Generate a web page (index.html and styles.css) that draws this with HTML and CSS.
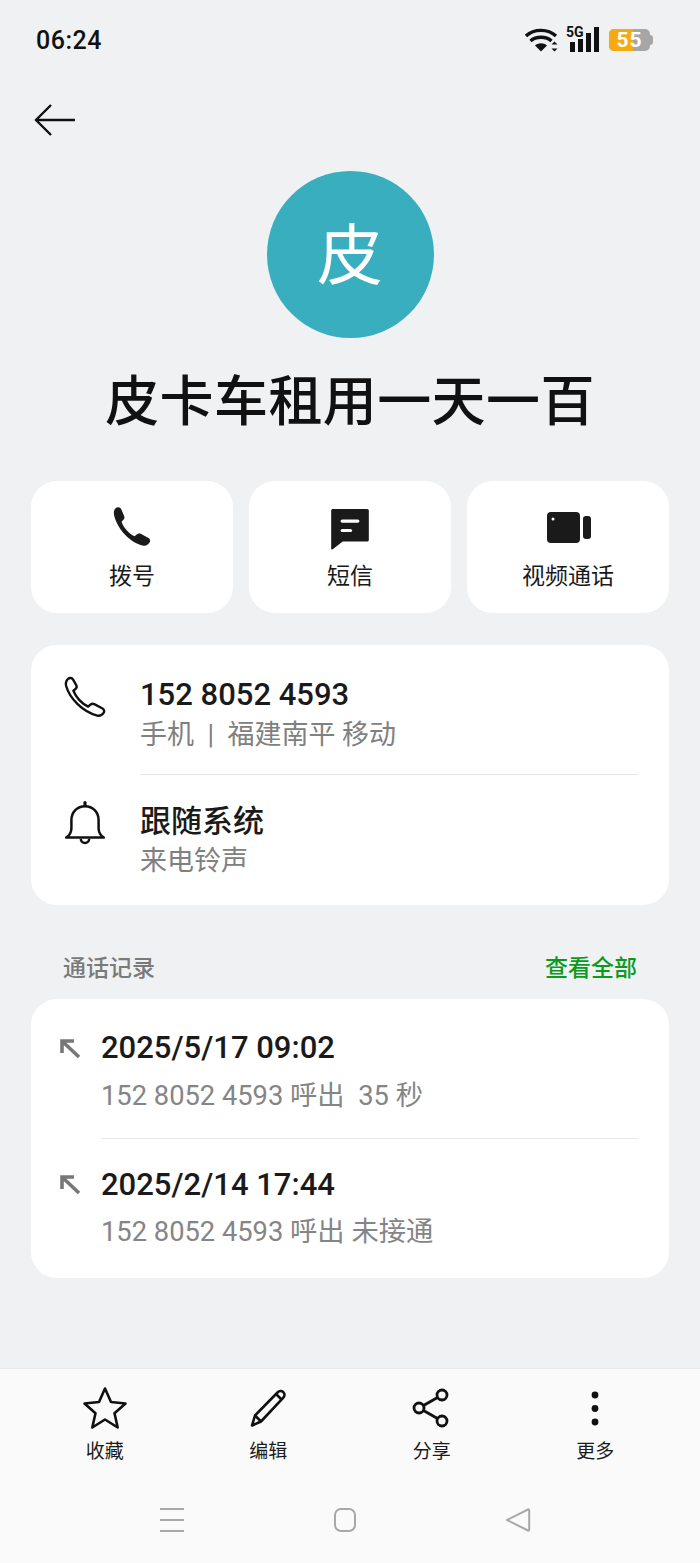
FILE: index.html
```html
<!DOCTYPE html>
<html lang="zh-CN">
<head>
    <meta charset="UTF-8">
    <meta name="viewport" content="width=device-width, initial-scale=1.0">
    <title>联系人详情</title>
    <link rel="stylesheet" href="styles.css">
</head>
<body>
<div class="page">
    <div class="status-bar">
        <span class="clock">06:24</span>
        <div class="status-icons">
            <svg class="wifi" width="34" height="26" viewBox="0 0 34 26">
                <path d="M1 9C9 1.500 23 1.500 31 9" fill="none" stroke="#111" stroke-width="3.400"/>
                <path d="M5.500 14C11 9 21 9 26.500 14" fill="none" stroke="#111" stroke-width="3.400"/>
                <path d="M10 18.500C13.500 15.500 18.500 15.500 22 18.500L16 24.500Z" fill="#111"/>
                <path d="M29.500 14.500l3 3h-6zM29.500 24.500l3-3h-6z" fill="#111"/>
            </svg>
            <div class="signal">
                <span class="five-g">5G</span>
                <svg width="34" height="26" viewBox="0 0 34 26">
                    <rect x="4" y="15" width="5" height="10" fill="#111"/>
                    <rect x="12" y="12" width="5" height="13" fill="#111"/>
                    <rect x="20" y="6" width="5" height="19" fill="#111"/>
                    <rect x="28" y="0" width="5" height="25" fill="#111"/>
                </svg>
            </div>
            <div class="battery">
                <div class="battery-body"><span class="battery-fill"></span><span class="battery-num">55</span></div>
                <span class="battery-tip"></span>
            </div>
        </div>
    </div>

    <div class="top-nav">
        <svg width="42" height="34" viewBox="0 0 42 34">
            <path d="M41 17H2M17 2L2 17l15 15" fill="none" stroke="#111" stroke-width="2.400"/>
        </svg>
    </div>

    <div class="profile">
        <div class="avatar">皮</div>
        <h1 class="name">皮卡车租用一天一百</h1>
    </div>

    <div class="actions">
        <div class="action-card">
            <svg width="46" height="46" viewBox="0 0 44 44">
                <path transform="translate(1.500 -2.500)" d="M5 3.500c1.500-1.300 4-1 5 .7l3 7c.6 1.300.2 2.500-.7 3.500l-1.800 1.800c1.500 5 7 11.500 12.500 14l2.300-2c1-.8 2.300-1 3.500-.3l7.500 4c1.500.8 2 2.800 1 4.300-1.200 2-3.200 3.300-5.500 3C19 37 7 24 3.500 11 2.800 8 3 5.200 5 3.500z" fill="#1a1a1a"/>
            </svg>
            <span class="action-label">拨号</span>
        </div>
        <div class="action-card">
            <svg width="46" height="46" viewBox="0 0 44 44">
                <path d="M4 3.500C4 2.500 4.800 2 5.500 2h33c.9 0 1.500.7 1.500 1.500v28c0 .8-.6 1.500-1.500 1.500H15L5.500 40.500c-.7.400-1.500 0-1.500-.8z" fill="#1a1a1a"/>
                <rect x="13" y="12" width="18" height="3" rx="1.500" fill="#fff"/>
                <rect x="13" y="21" width="11" height="3" rx="1.500" fill="#fff"/>
            </svg>
            <span class="action-label">短信</span>
        </div>
        <div class="action-card">
            <svg width="46" height="46" viewBox="0 0 46 46">
                <rect x="2" y="5" width="33" height="31" rx="4" fill="#1a1a1a"/>
                <rect x="38" y="9" width="8" height="23" rx="3" fill="#1a1a1a"/>
                <circle cx="8" cy="12" r="1.500" fill="#fff"/>
            </svg>
            <span class="action-label">视频通话</span>
        </div>
    </div>

    <div class="card info-card">
        <div class="info-row">
            <svg class="info-icon phone" width="46" height="46" viewBox="0 0 42 42">
                <path d="M5.500 4.500c1.300-1.300 3.500-1.200 4.500.4l3 5.200c.7 1.200.4 2.500-.6 3.400l-2 1.800c2.500 6 7.500 11.500 13.500 14.500l2.300-2c1-.8 2.200-.9 3.300-.3l7.500 4c1.600.9 1.900 2.700 1 4-1.300 1.900-3.500 3-5.800 2.500C19 34.500 7 22.500 3.800 11c-.6-2.400 0-4.900 1.700-6.500z" fill="none" stroke="#111" stroke-width="2.200" stroke-linejoin="round"/>
            </svg>
            <div class="info-text first">
                <div class="info-title">152 8052 4593</div>
                <div class="info-sub">手机 &nbsp;|&nbsp; 福建南平 移动</div>
            </div>
        </div>
        <div class="info-row">
            <svg class="info-icon bell" width="46" height="46" viewBox="0 0 44 44">
                <path d="M4 35c3-2 5-4.500 5-9v-7.500c0-8 5.500-13.500 13-13.500s13 5.500 13 13.500V26c0 4.500 2 7 5 9z" fill="none" stroke="#111" stroke-width="2.400" stroke-linejoin="round"/>
                <path d="M22 1.500v3" stroke="#111" stroke-width="3" stroke-linecap="round"/>
                <path d="M18 36c0 5.500 8 5.500 8 0" fill="none" stroke="#111" stroke-width="2.400"/>
            </svg>
            <div class="info-text">
                <div class="info-title">跟随系统</div>
                <div class="info-sub">来电铃声</div>
            </div>
        </div>
    </div>

    <div class="section-head">
        <span class="section-title">通话记录</span>
        <span class="section-link">查看全部</span>
    </div>

    <div class="card log-card">
        <div class="log-row">
            <svg class="log-icon" width="22" height="22" viewBox="0 0 22 22">
                <path d="M3 15V3h12M3.500 3.500L20 19" fill="none" stroke="#777" stroke-width="3.600"/>
            </svg>
            <div class="log-text first">
                <div class="log-time">2025/5/17 09:02</div>
                <div class="log-detail">152 8052 4593 呼出&nbsp; 35 秒</div>
            </div>
        </div>
        <div class="log-row">
            <svg class="log-icon" width="22" height="22" viewBox="0 0 22 22">
                <path d="M3 15V3h12M3.500 3.500L20 19" fill="none" stroke="#777" stroke-width="3.600"/>
            </svg>
            <div class="log-text">
                <div class="log-time">2025/2/14 17:44</div>
                <div class="log-detail">152 8052 4593 呼出 未接通</div>
            </div>
        </div>
    </div>

    <div class="bottom">
        <div class="toolbar">
            <div class="tool">
                <svg width="46" height="44" viewBox="0 0 46 44">
                    <path d="M23 2.500l6 13.500 14.500 1.500-11 9.800 3.200 14.200L23 33.500 10.300 41.500l3.200-14.200-11-9.800L17 16z" fill="none" stroke="#111" stroke-width="2.600" stroke-linejoin="round"/>
                </svg>
                <span class="tool-label">收藏</span>
            </div>
            <div class="tool">
                <svg width="46" height="44" viewBox="0 0 46 44">
                    <path d="M6 39.500l3-10L31.500 6.500c1.800-1.800 4.200-2 5.800-.4 1.600 1.600 1.600 4-.2 5.800L15 35.500z" fill="none" stroke="#111" stroke-width="2.600" stroke-linejoin="round" transform="translate(1 0)"/>
                    <path d="M10 29.500l6 6M31 8l6 6" fill="none" stroke="#111" stroke-width="2.600"/>
                </svg>
                <span class="tool-label">编辑</span>
            </div>
            <div class="tool">
                <svg width="46" height="44" viewBox="0 0 46 44">
                    <circle cx="33" cy="9" r="5" fill="none" stroke="#111" stroke-width="2.800"/>
                    <circle cx="10" cy="22" r="5" fill="none" stroke="#111" stroke-width="2.800"/>
                    <circle cx="33" cy="35" r="5" fill="none" stroke="#111" stroke-width="2.800"/>
                    <path d="M14.500 19.500L28.500 11.500M14.500 24.500L28.500 32.500" stroke="#111" stroke-width="2.800"/>
                </svg>
                <span class="tool-label">分享</span>
            </div>
            <div class="tool">
                <svg width="46" height="44" viewBox="0 0 46 44">
                    <circle cx="23" cy="9" r="3.400" fill="#111"/>
                    <circle cx="23" cy="22.500" r="3.400" fill="#111"/>
                    <circle cx="23" cy="36" r="3.400" fill="#111"/>
                </svg>
                <span class="tool-label">更多</span>
            </div>
        </div>
        <div class="nav-keys">
            <svg width="28" height="28" viewBox="0 0 28 28">
                <path d="M2 3h24M2 14h24M2 25h24" stroke="#a8a8a8" stroke-width="2"/>
            </svg>
            <svg width="28" height="28" viewBox="0 0 28 28">
                <rect x="4" y="3" width="20" height="22" rx="6" fill="none" stroke="#a8a8a8" stroke-width="2"/>
            </svg>
            <svg width="28" height="28" viewBox="0 0 28 28">
                <path d="M3 14L24 3.500c.6-.3 1.200 0 1.200.8v19.400c0 .8-.6 1.100-1.200.8z" fill="none" stroke="#a8a8a8" stroke-width="2" stroke-linejoin="round"/>
            </svg>
        </div>
    </div>
</div>
</body>
</html>
```

FILE: styles.css
```css
* {
    box-sizing: border-box;
}
body {
    margin: 0;
    background-color: #eff1f3;
    font-family: Roboto, "Noto Sans CJK SC", sans-serif;
    color: #1a1a1a;
}
.page {
    height: 1563px;
    width: 700px;
    display: flex;
    flex-direction: column;
    overflow: hidden;
}

/* status bar */
.status-bar {
    display: flex;
    justify-content: space-between;
    align-items: center;
    height: 26px;
    margin-top: 27px;
    padding: 0 47px 0 36px;
}
.clock {
    font-size: 25px;
    font-weight: 500;
    color: #111;
    letter-spacing: 0.5px;
}
.status-icons {
    display: flex;
    align-items: center;
}
.wifi {
    margin-right: 7px;
}
.signal {
    position: relative;
    width: 34px;
    height: 26px;
    margin-right: 9px;
}
.signal svg {
    display: block;
}
.five-g {
    position: absolute;
    left: 0;
    top: -1px;
    font-size: 14px;
    line-height: 13px;
    font-weight: 700;
    color: #111;
}
.battery {
    display: flex;
    align-items: center;
}
.battery-body {
    position: relative;
    width: 41px;
    height: 22px;
    border-radius: 5px;
    background-color: #a6a6a6;
    overflow: hidden;
}
.battery-fill {
    display: block;
    width: 58%;
    height: 100%;
    background-color: #f5ab10;
}
.battery-num {
    position: absolute;
    left: 0;
    right: 0;
    top: 0;
    text-align: center;
    font-size: 21px;
    line-height: 22px;
    font-weight: 700;
    letter-spacing: 1px;
    color: #fff;
}
.battery-tip {
    width: 3px;
    height: 10px;
    background-color: #a6a6a6;
    border-radius: 0 3px 3px 0;
}

.top-nav {
    margin-top: 50px;
    padding-left: 34px;
    height: 34px;
}
.top-nav svg {
    display: block;
}

/* avatar and name */
.profile {
    display: flex;
    flex-direction: column;
    align-items: center;
    margin-top: 34px;
}
.avatar {
    width: 167px;
    height: 167px;
    border-radius: 50%;
    background-color: #38aebf;
    color: #fff;
    font-size: 66px;
    line-height: 171px;
    text-align: center;
}
.name {
    margin: 26px 0 0;
    font-size: 54px;
    line-height: 78px;
    font-weight: 500;
    letter-spacing: 0.400px;
    color: #111;
    white-space: nowrap;
}

/* call / sms / video */
.actions {
    display: flex;
    gap: 16px;
    margin: 39px 31px 0;
}
.action-card {
    flex: 1;
    height: 132px;
    background-color: #fff;
    border-radius: 26px;
    display: flex;
    flex-direction: column;
    align-items: center;
    padding-top: 26px;
}
.action-card svg {
    display: block;
}
.action-label {
    margin-top: 8px;
    font-size: 23px;
    line-height: 32px;
}

.card {
    background-color: #fff;
    border-radius: 26px;
    margin: 0 31px;
}

/* number and ringtone */
.info-card {
    margin-top: 32px;
    height: 260px;
    padding: 0 31px 0 30px;
}
.info-row {
    display: flex;
    height: 130px;
}
.info-icon {
    flex: none;
    margin-top: 29px;
}
.info-icon.phone {
    margin-left: 1px;
    margin-right: -1px;
}
.info-icon.bell {
    margin-top: 26px;
    margin-left: 1px;
    margin-right: -1px;
}
.info-text {
    flex: 1;
    margin-left: 33px;
    padding-top: 29px;
}
.info-text.first {
    height: 130px;
    border-bottom: 1px solid #e6e6e6;
    padding-top: 32px;
}
.info-title {
    font-size: 31px;
    line-height: 36px;
    font-weight: 500;
    color: #1a1a1a;
}
.info-sub {
    margin-top: 4px;
    font-size: 27px;
    line-height: 36px;
    color: #808080;
}
.info-text:not(.first) .info-sub {
    margin-top: 3px;
}

.section-head {
    display: flex;
    justify-content: space-between;
    align-items: center;
    margin-top: 46px;
    padding: 0 63px 0 63px;
    height: 30px;
}
.section-title {
    font-size: 23px;
    font-weight: 500;
    color: #7a7a7a;
}
.section-link {
    font-size: 23px;
    font-weight: 500;
    color: #0a9a1e;
}

/* call log */
.log-card {
    margin-top: 18px;
    height: 279px;
    padding: 0 31px 0 28px;
}
.log-row {
    display: flex;
    height: 139px;
}
.log-row:first-child {
    height: 140px;
}
.log-icon {
    flex: none;
    margin-top: 35px;
}
.log-row:first-child .log-icon {
    margin-top: 39px;
}
.log-text {
    flex: 1;
    margin-left: 20px;
    padding-top: 25px;
}
.log-text.first {
    border-bottom: 1px solid #e8e8e8;
    padding-top: 28px;
}
.log-time {
    font-size: 31px;
    line-height: 42px;
    font-weight: 500;
    color: #1a1a1a;
}
.log-detail {
    margin-top: 7px;
    font-size: 27.300px;
    line-height: 38px;
    color: #858585;
}
.log-text.first .log-detail {
    margin-top: 8px;
}

/* bottom toolbar and system keys */
.bottom {
    margin-top: auto;
    height: 195px;
    background-color: #fafafa;
    border-top: 1px solid #e9e9e9;
}
.toolbar {
    display: flex;
    padding: 17px 23px 0;
}
.tool {
    flex: 1;
    display: flex;
    flex-direction: column;
    align-items: center;
}
.tool svg {
    display: block;
}
.tool-label {
    margin-top: 9px;
    font-size: 19px;
    line-height: 26px;
    color: #1a1a1a;
}
.nav-keys {
    display: flex;
    justify-content: space-between;
    padding: 0 168px 0 158px;
    margin-top: 41px;
}
```
